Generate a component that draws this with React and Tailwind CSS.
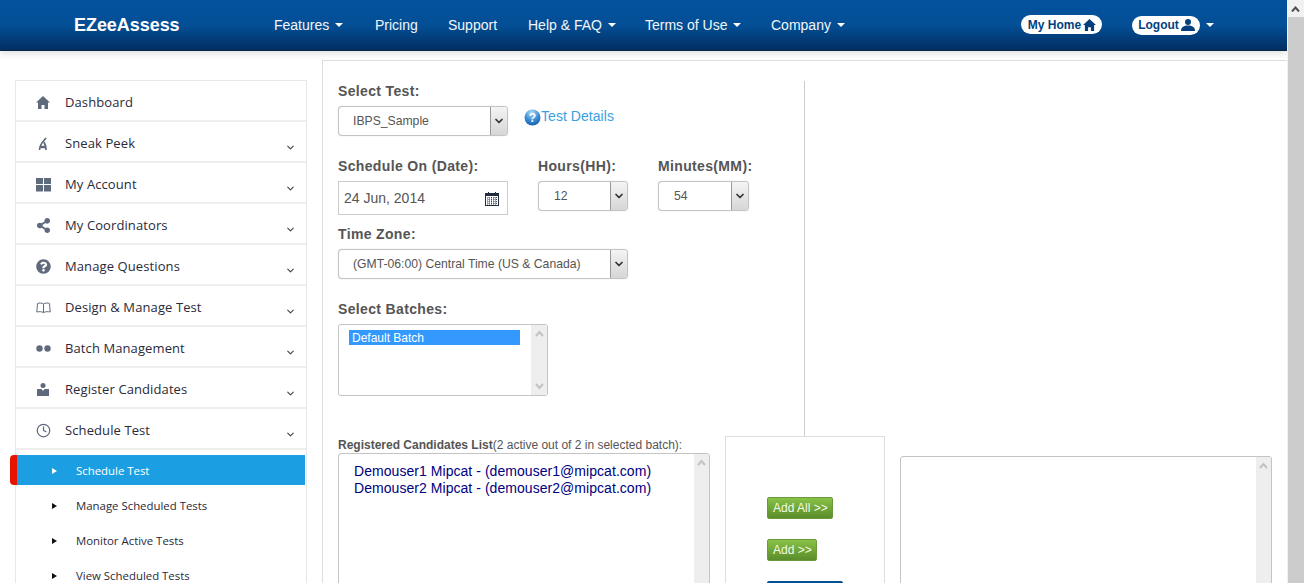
import React from 'react'
import { FaQuestionCircle, FaShareAlt } from 'react-icons/fa'
import { FiChevronDown, FiClock } from 'react-icons/fi'

const navItems = [
  { label: 'Features', caret: true, width: 'w-[101px]' },
  { label: 'Pricing', width: 'w-[73px]' },
  { label: 'Support', width: 'w-[80px]' },
  { label: 'Help & FAQ', caret: true, width: 'w-[117px]' },
  { label: 'Terms of Use', caret: true, width: 'w-[126px]' },
  { label: 'Company', caret: true, width: 'w-[90px]' },
]

function Caret({ className = 'border-t-white' }) {
  return <span className={`inline-block w-0 h-0 border-x-4 border-t-4 border-x-transparent ${className}`} />
}

function HomeIcon({ size = 14, color = '#5f6b7c' }) {
  return (
    <svg width={size} height={size - 1} viewBox="0 0 14 13" fill={color}>
      <path d="M7 0 L14 6.5 L12 6.5 L12 13 L8.5 13 L8.5 9 L5.5 9 L5.5 13 L2 13 L2 6.5 L0 6.5 Z" />
    </svg>
  )
}

function UserIcon() {
  return (
    <svg width="14" height="12" viewBox="0 0 14 12" fill="#033f7f">
      <circle cx="7" cy="3" r="3" />
      <path d="M0 12 C0 8 3 6.6 7 6.6 C11 6.6 14 8 14 12 Z" />
    </svg>
  )
}

function GridIcon() {
  return (
    <svg width="15" height="14" viewBox="0 0 15 14" fill="#5f6b7c">
      <rect x="0" y="0" width="7" height="6" />
      <rect x="8" y="0" width="7" height="6" />
      <rect x="0" y="7" width="7" height="6.5" />
      <rect x="8" y="7" width="7" height="6.5" />
    </svg>
  )
}

function PeekIcon() {
  return (
    <svg width="10" height="14" viewBox="0 0 10 14" fill="none" stroke="#5f6b7c" strokeWidth="1.7" className="ml-[2px]">
      <path d="M8 1 C6 4 2 6 1.5 13" />
      <path d="M6 5 C7.5 8 8 10 8 13" />
      <path d="M2 10 H7" strokeWidth="2.4" />
    </svg>
  )
}

function BookIcon() {
  return (
    <svg width="15" height="12" viewBox="0 0 15 12" fill="none" stroke="#5f6b7c" strokeWidth="1">
      <path d="M7.5 2 C6 .8 3 .8 1.5 1.5 L.8 10 C3 9.4 6 9.6 7.5 10.6 C9 9.6 12 9.4 14.2 10 L13.5 1.5 C12 .8 9 .8 7.5 2 Z M7.5 2 V10.6" />
    </svg>
  )
}

function DotsIcon() {
  return (
    <svg width="15" height="7" viewBox="0 0 15 7" fill="#5f6b7c">
      <circle cx="3.5" cy="3.5" r="3.2" />
      <circle cx="11.5" cy="3.5" r="3.2" />
    </svg>
  )
}

function BadgeIcon() {
  return (
    <svg width="12" height="13" viewBox="0 0 12 13" fill="#5f6b7c" className="ml-[1px]">
      <circle cx="6" cy="2.5" r="2.5" />
      <path d="M0 6 H4.5 L6 8 L7.5 6 H12 V13 H0 Z" />
    </svg>
  )
}

function HelpBall() {
  return (
    <svg width="17" height="17" viewBox="0 0 17 17" className="mt-[3px] shrink-0">
      <defs>
        <radialGradient id="ball" cx="45%" cy="20%" r="85%">
          <stop offset="0%" stopColor="#b5dcf7" />
          <stop offset="55%" stopColor="#3a8fd6" />
          <stop offset="100%" stopColor="#0f5ba8" />
        </radialGradient>
      </defs>
      <circle cx="8.5" cy="8.5" r="8" fill="url(#ball)" />
      <text x="8.5" y="13" textAnchor="middle" fontSize="12" fontWeight="bold" fill="#fff" fontFamily="Liberation Sans, sans-serif">?</text>
    </svg>
  )
}

function CalendarIcon() {
  return (
    <svg width="14" height="14" viewBox="0 0 14 14">
      <rect x=".5" y="1.5" width="13" height="12" fill="#fff" stroke="#1f2d3d" />
      <rect x="0" y="1" width="14" height="3" fill="#1f2d3d" />
      <rect x="3" y="0" width="1" height="2" fill="#1f2d3d" />
      <rect x="10" y="0" width="1" height="2" fill="#1f2d3d" />
      <path d="M2 6h10M2 8h10M2 10h10M2 12h10M4 5v8M6.5 5v8M9 5v8M11.5 5v8" stroke="#3a4654" strokeWidth="1" strokeDasharray="1 1" />
    </svg>
  )
}

const sideItems = [
  { label: 'Dashboard', icon: <HomeIcon /> },
  { label: 'Sneak Peek', icon: <PeekIcon />, chevron: true },
  { label: 'My Account', icon: <GridIcon />, chevron: true },
  { label: 'My Coordinators', icon: <FaShareAlt className="text-[#5f6b7c] text-[15px]" />, chevron: true },
  { label: 'Manage Questions', icon: <FaQuestionCircle className="text-[#5f6b7c] text-[15px]" />, chevron: true },
  { label: 'Design & Manage Test', icon: <BookIcon />, chevron: true },
  { label: 'Batch Management', icon: <DotsIcon />, chevron: true },
  { label: 'Register Candidates', icon: <BadgeIcon />, chevron: true },
  { label: 'Schedule Test', icon: <FiClock className="text-[#5f6b7c] text-[15px]" />, chevron: true },
]

const subItems = ['Manage Scheduled Tests', 'Monitor Active Tests', 'View Scheduled Tests']

function SelectBox({ value, className, pad = 'pl-[14px]' }) {
  return (
    <div className={`flex border border-[#c4c4c4] rounded-[4px] bg-white overflow-hidden shadow-[0_0_1px_rgba(0,0,0,0.25)] ${className}`}>
      <div className={`flex-1 flex items-center text-[12.2px] text-[#555] ${pad}`}>{value}</div>
      <div className="w-[17px] border-l border-[#999] bg-gradient-to-b from-[#f4f4f4] to-[#d6d6d6] flex items-center justify-center">
        <FiChevronDown className="text-[#333] text-[12px]" strokeWidth={3.5} />
      </div>
    </div>
  )
}

function ScrollTrack({ className = 'w-[15px]', bottomArrow }) {
  return (
    <div className={`${className} bg-[#eeeeee] flex flex-col items-center justify-between py-[5px] shrink-0`}>
      <svg width="9" height="7" viewBox="0 0 9 7" fill="none" stroke="#c2c2c2" strokeWidth="2"><path d="M1 6 L4.5 2 L8 6" /></svg>
      {bottomArrow && <svg width="9" height="7" viewBox="0 0 9 7" fill="none" stroke="#c2c2c2" strokeWidth="2"><path d="M1 1 L4.5 5 L8 1" /></svg>}
    </div>
  )
}

function Label({ children, className = '' }) {
  return <div className={`font-bold text-[14px] tracking-[0.35px] leading-[20px] text-[#555] ${className}`}>{children}</div>
}

function GreenButton({ children, className = '' }) {
  return (
    <div className={`h-[22px] border border-[#6b9a3a] rounded-[2px] bg-gradient-to-b from-[#88c246] to-[#5b8d2b] text-[#f2fbe6] text-[12px] leading-[20px] pl-[5px] whitespace-nowrap overflow-hidden ${className}`}>
      {children}
    </div>
  )
}

export default function App() {
  return (
    <div className="h-[583px] w-[1304px] overflow-hidden flex bg-white font-['Liberation_Sans',Arial,sans-serif]">
      <div className="w-[1287px] shrink-0 flex flex-col overflow-hidden">
        {/* Header */}
        <header className="h-[51px] shrink-0 flex items-center bg-gradient-to-b from-[#03529d] via-[#034f96] to-[#022f63] border-b border-[#0b2544] shadow-[0_2px_8px_rgba(0,0,0,0.15)] relative text-white">
          <div className="w-[274px] pl-[74px] text-[18px] font-bold tracking-[-0.05px]">EZeeAssess</div>
          <nav className="flex w-[587px]">
            {navItems.map((item) => (
              <div key={item.label} className={`${item.width} shrink-0 text-[14px] flex items-center gap-[6px] text-[#f2f6fa]`}>
                {item.label}
                {item.caret && <Caret />}
              </div>
            ))}
          </nav>
          <div className="ml-[160px] flex items-center h-full">
            <div className="w-[81px] h-[19px] pl-px bg-white rounded-full text-[#033f7f] text-[12px] font-bold flex items-center justify-center gap-[2px] -mt-[2px] pt-px">
              My Home <HomeIcon size={13} color="#033f7f" />
            </div>
            <div className="ml-[30px] w-[68px] h-[19px] pl-px bg-white rounded-full text-[#033f7f] text-[12px] font-bold flex items-center justify-center gap-[2px]">
              Logout <UserIcon />
            </div>
            <Caret className="border-t-white ml-[6px]" />
          </div>
        </header>

        <div className="flex-1 flex min-h-0">
          {/* Sidebar */}
          <aside className="w-[322px] shrink-0 pl-[15px] pt-[29px] font-['Open_Sans',sans-serif]">
            <div className="relative w-[292px] h-[520px] border border-[#e8e8e8] border-b-0">
              {sideItems.map((item) => (
                <div key={item.label} className="h-[41px] pt-[4px] border-b-2 border-[#eeeeee] flex items-center relative text-[13px] tracking-[0.1px] text-[#2a2a3a]">
                  <span className="w-[49px] pl-[20px] flex justify-start shrink-0">{item.icon}</span>
                  {item.label}
                  {item.chevron && (
                    <FiChevronDown className="absolute right-[10px] top-[20px] text-[#444] text-[11px]" strokeWidth={2.5} />
                  )}
                </div>
              ))}
              <div className="relative mt-[5px] mr-px h-[30px] pt-px bg-[#1c9fe2] text-white flex items-center text-[11.4px]">
                <span className="absolute -left-[6px] top-0 w-[7px] h-[30px] bg-[#e81400] rounded-l-[4px]" />
                <span className="ml-[36px] w-0 h-0 shrink-0 border-y-[3px] border-l-[5px] border-y-transparent border-l-white" />
                <span className="ml-[19px]">Schedule Test</span>
              </div>
              <div className="pt-[3px]">
                {subItems.map((sub) => (
                  <div key={sub} className="h-[35px] flex items-center text-[11.4px] text-[#2a2a3a]">
                    <span className="ml-[36px] w-0 h-0 shrink-0 border-y-[3px] border-l-[5px] border-y-transparent border-l-[#111]" />
                    <span className="ml-[19px]">{sub}</span>
                  </div>
                ))}
              </div>
            </div>
          </aside>

          {/* Main panel */}
          <main className="flex-1 min-w-0 mt-[9px] border-l border-t border-[#dddddd] pl-[15px] pr-[14px] pt-[20px]">
            <div className="w-[467px] h-[355px] border-r border-[#cccccc]">
              <Label>Select Test:</Label>
              <div className="flex mt-[5px]">
                <SelectBox value="IBPS_Sample" className="w-[170px] h-[30px]" />
                <div className="ml-[16px] h-[20px] flex items-start leading-[20px] text-[14px] tracking-[0.05px] text-[#3aa0e4]">
                  <HelpBall />
                  Test Details
                </div>
              </div>

              <div className="flex mt-[20px]">
                <div className="w-[200px]">
                  <Label>Schedule On (Date):</Label>
                  <div className="mt-[5px] w-[170px] h-[34px] pt-px border border-[#ccc] flex items-center justify-between pl-[5px] pr-[8px] text-[14px] text-[#555]">
                    24 Jun, 2014
                    <CalendarIcon />
                  </div>
                </div>
                <div className="w-[120px]">
                  <Label>Hours(HH):</Label>
                  <SelectBox value="12" className="mt-[5px] w-[90px] h-[30px]" pad="pl-[15px]" />
                </div>
                <div>
                  <Label>Minutes(MM):</Label>
                  <SelectBox value="54" className="mt-[5px] w-[91px] h-[30px]" pad="pl-[15px]" />
                </div>
              </div>

              <Label className="mt-[9px]">Time Zone:</Label>
              <SelectBox value="(GMT-06:00) Central Time (US & Canada)" className="mt-[5px] w-[290px] h-[30px]" />

              <Label className="mt-[20px]">Select Batches:</Label>
              <div className="mt-[5px] w-[210px] h-[72px] border border-[#c4c4c4] rounded-[3px] flex overflow-hidden">
                <div className="flex-1 pl-[10px] pr-[11px] pt-[5px]">
                  <div className="h-[15px] pt-px bg-[#3399ff] text-white text-[12px] leading-[15px] pl-[3px]">Default Batch</div>
                </div>
                <ScrollTrack className="w-[16px]" bottomArrow />
              </div>
            </div>

            <div className="flex">
              <div className="w-[372px] shrink-0 pt-[2px]">
                <div className="text-[12px] leading-[15px] text-[#555] tracking-[0px]">
                  <span className="font-bold">Registered Candidates List</span>(2 active out of 2 in selected batch):
                </div>
                <div className="h-[300px] border border-[#c4c4c4] rounded-[3px] flex overflow-hidden">
                  <div className="flex-1 pl-[15px] pt-[9px] text-[14px] leading-[17px] text-[#000080] tracking-[0.05px]">
                    <div>Demouser1 Mipcat - (demouser1@mipcat.com)</div>
                    <div>Demouser2 Mipcat - (demouser2@mipcat.com)</div>
                  </div>
                  <ScrollTrack />
                </div>
              </div>

              <div className="ml-[15px] w-[160px] h-[300px] shrink-0 border border-[#dddddd] pl-[41px] pt-[60px]">
                <GreenButton className="w-[66px]">Add All &gt;&gt;</GreenButton>
                <GreenButton className="w-[50px] mt-[20px]">Add &gt;&gt;</GreenButton>
                <div className="mt-[20px] w-[76px] h-[22px] bg-[#034f96] rounded-[2px]" />
              </div>

              <div className="ml-[15px] mt-[20px] w-[372px] h-[300px] border border-[#c4c4c4] rounded-[3px] flex overflow-hidden">
                <div className="flex-1" />
                <ScrollTrack />
              </div>
            </div>
          </main>
        </div>
      </div>

      {/* Browser scrollbar */}
      <div className="w-[17px] shrink-0 bg-[#f1f1f1] flex flex-col">
        <div className="h-[17px] flex items-center justify-center">
          <svg width="9" height="6" viewBox="0 0 9 6" fill="none" stroke="#505050" strokeWidth="2"><path d="M1 5.5 L4.5 1.5 L8 5.5" /></svg>
        </div>
        <div className="flex-1 ml-px bg-[#cccccc]" />
      </div>
    </div>
  )
}
